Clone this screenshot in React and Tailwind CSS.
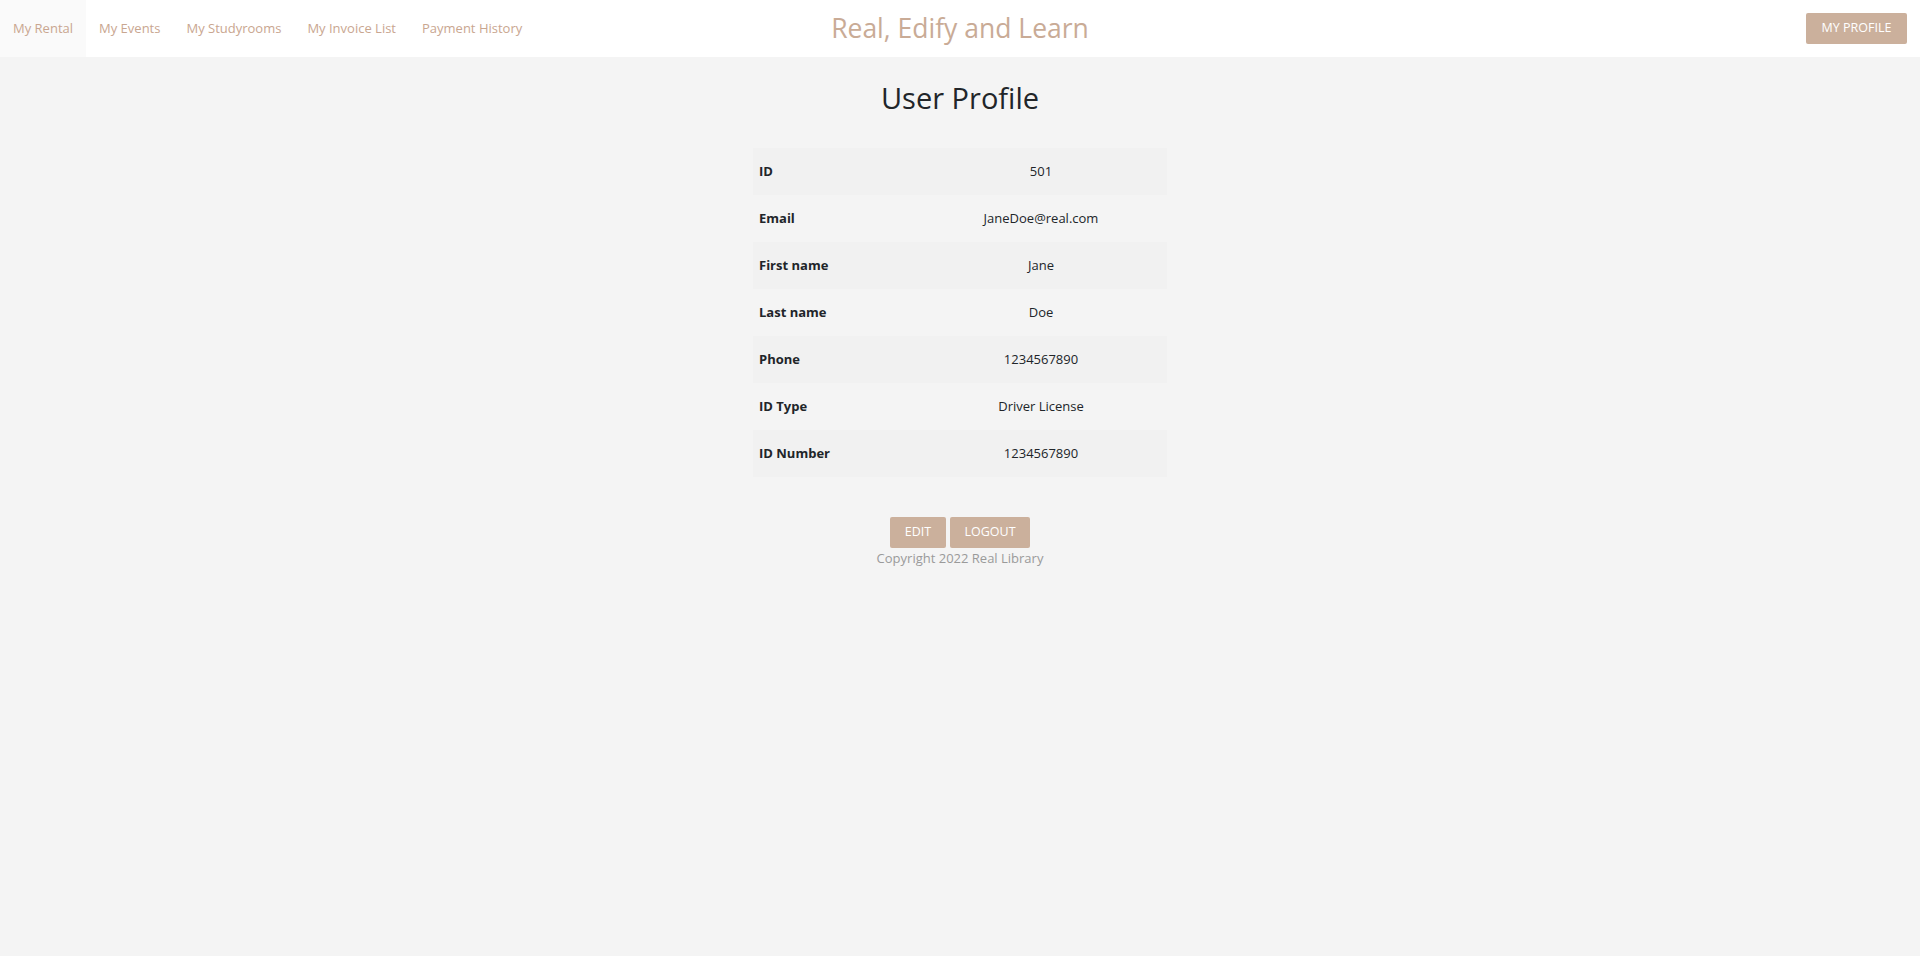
const NAV = ["My Rental", "My Events", "My Studyrooms", "My Invoice List", "Payment History"];

const ROWS = [
  ["ID", "501"],
  ["Email", "JaneDoe@real.com"],
  ["First name", "Jane"],
  ["Last name", "Doe"],
  ["Phone", "1234567890"],
  ["ID Type", "Driver License"],
  ["ID Number", "1234567890"],
];

export default function App() {
  return (
    <div className="min-h-screen bg-[#f4f4f4] font-['Segoe_UI','Open_Sans',sans-serif] text-[#212529]">
      {/* Header */}
      <header className="grid grid-cols-[1fr_auto_1fr] items-center h-[57px] bg-white">
        <nav className="flex h-full items-stretch">
          {NAV.map((item, i) => (
            <a
              key={item}
              href="#"
              className={
                "flex items-center px-[13px] text-[13px] text-[#c9a690] " +
                (i === 0 ? "bg-[#fafafa]" : "")
              }
            >
              {item}
            </a>
          ))}
        </nav>
        <h1 className="text-[26.5px] text-[#c9ab96] leading-none">Real, Edify and Learn</h1>
        <div className="flex justify-end pr-[13px]">
          <button className="h-[31px] w-[101px] rounded-[2px] bg-[#cbb09c] text-white text-[12.5px]">
            MY PROFILE
          </button>
        </div>
      </header>

      {/* Content */}
      <main className="flex flex-col items-center">
        <h2 className="mt-[21px] text-[29px] leading-[40px]">User Profile</h2>

        <table className="mt-[30px] w-[414px] text-[13px] border-collapse">
          <tbody>
            {ROWS.map(([label, value], i) => (
              <tr key={label} className={i % 2 === 0 ? "bg-[#f1f1f1]" : ""}>
                <td className="h-[47px] w-[162px] pl-[6px] font-bold">{label}</td>
                <td className="h-[47px] text-center">{value}</td>
              </tr>
            ))}
          </tbody>
        </table>

        <div className="mt-[40px] flex gap-[4px]">
          <button className="h-[31px] w-[56px] rounded-[2px] bg-[#cbb09c] text-white text-[12.5px]">EDIT</button>
          <button className="h-[31px] w-[80px] rounded-[2px] bg-[#cbb09c] text-white text-[12.5px]">LOGOUT</button>
        </div>
        <p className="text-[13px] text-[#9a9a9a] leading-[20px]">Copyright 2022 Real Library</p>
      </main>
    </div>
  );
}
